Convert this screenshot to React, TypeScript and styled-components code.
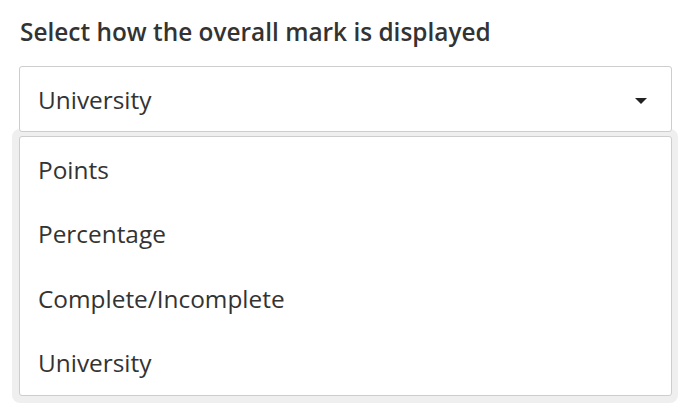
import React, { useState } from 'react';
import styled, { createGlobalStyle } from 'styled-components';

const GlobalStyle = createGlobalStyle`
    body {
        margin: 0;
        background: #ffffff;
        font-family: "Open Sans", "Noto Sans", sans-serif;
        color: #333333;
    }
`;

const Page = styled.main`
    width: 696px;
    height: 414px;
    padding: 14px 24px 0 19px;
    box-sizing: border-box;
`;

const Label = styled.h2`
    margin: 0 0 16px 1px;
    font-size: 24.4px;
    line-height: 36px;
    font-weight: 600;
    color: #333333;
`;

const SelectBox = styled.div`
    position: relative;
    z-index: 1;
    display: flex;
    align-items: center;
    justify-content: space-between;
    height: 66px;
    padding: 0 24px 0 18px;
    box-sizing: border-box;
    border: 1px solid #cdcdcd;
    border-radius: 3px;
    background: #ffffff;
    font-size: 24.4px;
`;

const Caret = styled.span`
    width: 0;
    height: 0;
    border-left: 6px solid transparent;
    border-right: 6px solid transparent;
    border-top: 6px solid #222222;
    margin-top: 4px;
`;

const Popover = styled.div`
    margin: -3px -6px 0 -7px;
    padding: 7px 6px 7px 7px;
    background: #efefef;
    border-radius: 8px;
`;

const List = styled.ul`
    margin: 0;
    padding: 0;
    list-style: none;
    background: #ffffff;
    border: 1px solid #cdcdcd;
    border-radius: 3px;
`;

const Option = styled.li<{ $selected?: boolean }>`
    display: flex;
    align-items: center;
    height: 64.5px;
    padding-left: 18px;
    font-size: 24.4px;
    color: #333333;
    cursor: pointer;
`;

const options = ['Points', 'Percentage', 'Complete/Incomplete', 'University'];

const App: React.FC = () => {
    const [value, setValue] = useState('University');

    return (
        <Page>
            <GlobalStyle />
            <Label>Select how the overall mark is displayed</Label>
            <SelectBox>
                <span>{value}</span>
                <Caret />
            </SelectBox>
            <Popover>
                <List>
                    {options.map((o) => (
                        <Option key={o} $selected={o === value} onClick={() => setValue(o)}>
                            {o}
                        </Option>
                    ))}
                </List>
            </Popover>
        </Page>
    );
};

export default App;
